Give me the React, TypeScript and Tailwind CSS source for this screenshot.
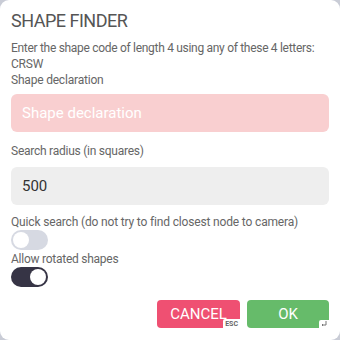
import { useState } from "react";

const Toggle = ({ on, onClick }: { on: boolean; onClick: () => void }) => (
  <button
    type="button"
    onClick={onClick}
    className={`flex items-center w-[37px] h-[20px] rounded-full px-[2px] ${
      on ? "bg-[#363445] justify-end" : "bg-[#d6d9e2] justify-start"
    }`}
  >
    <span className="block w-[16px] h-[16px] rounded-full bg-white" />
  </button>
);

export default function App() {
  const [quick, setQuick] = useState(false);
  const [rotated, setRotated] = useState(true);
  const [code, setCode] = useState("");
  const [radius, setRadius] = useState("500");

  return (
    <div
      className="w-[340px] h-[340px] bg-[#c9ccd6]"
      style={{ fontFamily: "Roboto, 'Noto Sans', sans-serif" }}
    >
      <div className="w-full h-full bg-white rounded-[9px] px-[11px] pt-[11px] flex flex-col">
        <h1 className="text-[18px] leading-[20px] text-[#555] tracking-[-0.5px]">
          SHAPE FINDER
        </h1>
        <div className="mt-[9px] text-[12px] leading-[16px] text-[#666] tracking-[-0.2px]">
          <p className="tracking-[-0.3px] whitespace-nowrap">
            Enter the shape code of length 4 using any of these 4 letters:
          </p>
          <p>CRSW</p>
          <p>Shape declaration</p>
        </div>
        <input
          value={code}
          onChange={(e) => setCode(e.target.value)}
          placeholder="Shape declaration"
          className="mt-[6px] h-[38px] w-full rounded-[6px] bg-[#f9cfd0] px-[11px] text-[15px] text-[#333] placeholder:text-white outline-none"
        />
        <p className="mt-[11px] text-[12px] leading-[16px] text-[#666] tracking-[-0.25px]">
          Search radius (in squares)
        </p>
        <input
          value={radius}
          onChange={(e) => setRadius(e.target.value)}
          className="mt-[8px] h-[38px] w-full rounded-[6px] bg-[#eeeeee] px-[11px] text-[15px] text-[#333] outline-none"
        />
        <p className="mt-[9px] text-[12px] leading-[16px] text-[#666] tracking-[-0.16px] whitespace-nowrap">
          Quick search (do not try to find closest node to camera)
        </p>
        <Toggle on={quick} onClick={() => setQuick(!quick)} />
        <p className="mt-[1px] text-[12px] leading-[16px] text-[#666] tracking-[-0.25px]">
          Allow rotated shapes
        </p>
        <Toggle on={rotated} onClick={() => setRotated(!rotated)} />
        <div className="mt-[13px] flex justify-end gap-[7px]">
          <button className="relative w-[83px] h-[28px] rounded-[4px] bg-[#ef5072] text-white text-[15px]">
            CANCEL
            <span className="absolute right-0 bottom-0 bg-white text-[#666] text-[7px] font-bold leading-[8px] px-[2px] pt-[1px] rounded-tl-[2px]">
              ESC
            </span>
          </button>
          <button className="relative w-[82px] h-[28px] rounded-[4px] bg-[#66bb6a] text-white text-[15px]">
            OK
            <span className="absolute right-0 bottom-0 bg-white w-[10px] h-[8px] rounded-tl-[2px] flex items-end justify-center">
              <svg width="6" height="6" viewBox="0 0 6 6" className="mb-[1px]">
                <path d="M5 0v4H1M2 3L1 4l1 1" stroke="#777" strokeWidth="1" fill="none" />
              </svg>
            </span>
          </button>
        </div>
      </div>
    </div>
  );
}
